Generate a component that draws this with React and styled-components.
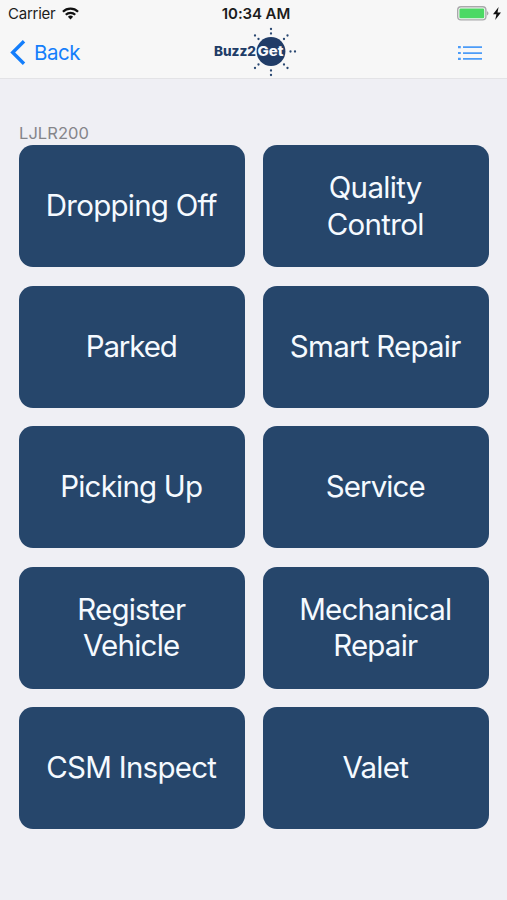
import React from "react";
import styled, { createGlobalStyle } from "styled-components";

const GlobalStyle = createGlobalStyle`
  * { box-sizing: border-box; }
  body { margin: 0; background: #efeff4; }
`;

const Screen = styled.div`
  width: 507px;
  height: 900px;
  overflow: hidden;
  background: #efeff4;
  font-family: Inter, "Liberation Sans", sans-serif;
`;

const Header = styled.header`
  height: 79px;
  background: #f7f7f7;
  border-bottom: 1px solid #e3e3e6;
`;

const StatusBar = styled.div`
  height: 27px;
  display: grid;
  grid-template-columns: 1fr auto 1fr;
  align-items: center;
  padding: 0 6px 0 8px;
  color: #1c1c1c;
  font-size: 15px;
`;

const StatusGroup = styled.div`
  display: flex;
  align-items: center;
  justify-content: ${(p) => (p.$end ? "flex-end" : "flex-start")};
  gap: ${(p) => (p.$end ? "4px" : "7px")};
`;

const Carrier = styled.span`
  letter-spacing: -0.25px;
  line-height: 20px;
`;

const Clock = styled.time`
  padding-left: 3px;
  font-weight: 600;
  line-height: 20px;
  letter-spacing: -0.1px;
`;

const NavBar = styled.nav`
  height: 51px;
  display: grid;
  grid-template-columns: 1fr 84px 1fr;
  align-items: center;
  padding: 0 21px 0 10px;
`;

const BackButton = styled.button`
  display: flex;
  align-items: center;
  gap: 8px;
  padding: 0;
  border: 0;
  background: none;
  color: #147efb;
  font: 400 20.5px/26px Inter, "Liberation Sans", sans-serif;
  letter-spacing: -0.5px;
`;

const BrandLink = styled.a`
  display: block;
  margin-left: 7.5px;
`;

const MenuButton = styled.button`
  justify-self: end;
  display: flex;
  padding: 0 4px 0 0;
  border: 0;
  background: none;
`;

const Icon = styled.svg`
  display: block;
  flex: none;
  overflow: visible;
`;

const Main = styled.main`
  padding: 45px 18px 0 19px;
`;

const SectionTitle = styled.h1`
  margin: 0;
  height: 21px;
  color: #85858a;
  font-size: 16.5px;
  font-weight: 400;
  line-height: 19px;
  letter-spacing: 0.05px;
`;

const Grid = styled.div`
  display: grid;
  grid-template-columns: 226px 226px;
  grid-auto-rows: 122px;
  gap: 18.5px 18px;
`;

const Tile = styled.button`
  display: flex;
  align-items: center;
  justify-content: center;
  padding: 0 1.5px 1px 0;
  border: 0;
  border-radius: 14px;
  background: #26466b;
  color: #f5faff;
  font: 400 29.5px/36.5px Inter, "Liberation Sans", sans-serif;
  letter-spacing: ${(p) => p.$tracking}px;
  text-align: center;
  white-space: pre-line;
`;

const actions = [
  { label: "Dropping Off", tracking: -0.75 },
  { label: "Quality\nControl", tracking: -0.65 },
  { label: "Parked", tracking: -1.1 },
  { label: "Smart Repair", tracking: -0.75 },
  { label: "Picking Up", tracking: -0.8 },
  { label: "Service", tracking: -0.95 },
  { label: "Register\nVehicle", tracking: -0.75 },
  { label: "Mechanical\nRepair", tracking: -0.8 },
  { label: "CSM Inspect", tracking: -0.75 },
  { label: "Valet", tracking: -0.75 },
];

const rays = [
  [57, 3.5], [57, 8], [57, 45], [57, 49.5],
  [76.5, 26], [81, 26],
  [41, 10], [44.5, 13.5], [73.5, 10], [70, 13.5],
  [41, 42.5], [44.5, 39], [73.5, 42.5], [70, 39],
];

function Wifi() {
  return (
    <Icon width="17" height="13" viewBox="0 0 18 13" fill="none" stroke="#111" strokeWidth="2.3">
      <path d="M1 4.7a11.4 11.4 0 0 1 16 0M4 7.9a7.1 7.1 0 0 1 10 0" />
      <path d="M6.2 10a4 4 0 0 1 5.6 0L9 12.9z" fill="#111" stroke="none" />
    </Icon>
  );
}

function Logo() {
  return (
    <Icon width="84" height="51" viewBox="0 0 84 51" role="img" aria-label="Buzz2Get">
      <circle cx="57" cy="24.5" r="14.4" fill="#203c67" />
      {rays.map(([x, y]) => (
        <circle key={`${x}-${y}`} cx={x} cy={y - 1.5} r="1.15" fill="#294771" />
      ))}
      <g fontFamily="Inter, sans-serif" fontSize="13.2" fontWeight="800">
        <text x="0" y="28.7" fill="#203c67" textLength="42" lengthAdjust="spacingAndGlyphs">Buzz2</text>
        <text x="43.5" y="28.7" fill="#f7f9fc" textLength="26" lengthAdjust="spacingAndGlyphs">Get</text>
      </g>
    </Icon>
  );
}

export default function App() {
  return (
    <Screen>
      <GlobalStyle />
      <Header>
        <StatusBar>
          <StatusGroup>
            <Carrier>Carrier</Carrier>
            <Wifi />
          </StatusGroup>
          <Clock>10:34 AM</Clock>
          <StatusGroup $end>
            <Icon width="32" height="15" viewBox="0 0 32 15">
              <rect x=".7" y=".7" width="28.2" height="13.2" rx="3.3" fill="#f7f7f7" stroke="#a9a9ab" strokeWidth="1.4" />
              <rect x="2.4" y="2.4" width="24.8" height="9.8" rx="1.3" fill="#4cd964" />
              <path d="M30 5q3 2.3 0 4.6z" fill="#a9a9ab" />
            </Icon>
            <Icon width="8" height="13" viewBox="0 0 8 13" fill="#111">
              <path d="M5.6 0 0 7.3h3.4L2.2 13 8 5.4H4.5z" />
            </Icon>
          </StatusGroup>
        </StatusBar>
        <NavBar>
          <BackButton>
            <Icon width="16" height="25" viewBox="0 0 16 25" fill="none" stroke="#147efb" strokeWidth="3.4">
              <path d="M14 1.3 2.7 12.5 14 23.7" />
            </Icon>
            Back
          </BackButton>
          <BrandLink>
            <Logo />
          </BrandLink>
          <MenuButton aria-label="Menu">
            <Icon width="24" height="16" viewBox="0 0 24 16" fill="#4c9cf8">
              <path d="M0 1h2.8v2.2H0zM0 6.9h2.8v2.2H0zM0 12.8h2.8v2.2H0zM5 1.3h19v1.7H5zM5 7.2h19v1.7H5zM5 13.1h19v1.7H5z" />
            </Icon>
          </MenuButton>
        </NavBar>
      </Header>
      <Main>
        <SectionTitle>LJLR200</SectionTitle>
        <Grid>
          {actions.map(({ label, tracking }) => (
            <Tile key={label} $tracking={tracking}>{label}</Tile>
          ))}
        </Grid>
      </Main>
    </Screen>
  );
}
